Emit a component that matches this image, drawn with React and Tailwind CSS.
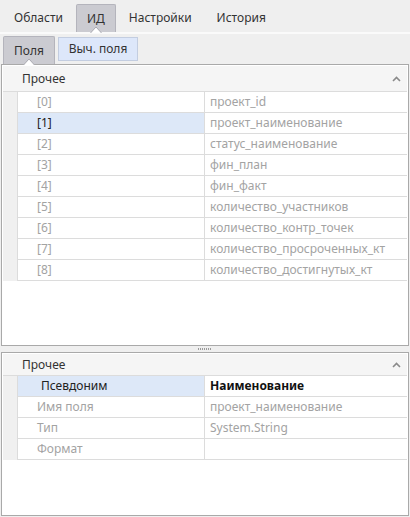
import React from 'react';

const fields = [
  'проект_id',
  'проект_наименование',
  'статус_наименование',
  'фин_план',
  'фин_факт',
  'количество_участников',
  'количество_контр_точек',
  'количество_просроченных_кт',
  'количество_достигнутых_кт',
];

const props = [
  { name: 'Псевдоним', value: 'Наименование', active: true },
  { name: 'Имя поля', value: 'проект_наименование' },
  { name: 'Тип', value: 'System.String' },
  { name: 'Формат', value: '' },
];

function Pointer() {
  return (
    <span className="absolute bottom-[-1px] left-1/2 -translate-x-1/2">
      <svg width="12" height="7" viewBox="0 0 12 7">
        <path d="M0.5 7 L6 1 L11.5 7" fill="#ffffff" stroke="#a9a9b0" strokeWidth="1" />
      </svg>
    </span>
  );
}

function Caret() {
  return (
    <svg width="9" height="6" viewBox="0 0 9 6" className="mr-[6px]">
      <path d="M1 5 L4.5 1.5 L8 5" fill="none" stroke="#8a8a8a" strokeWidth="1.6" />
    </svg>
  );
}

function GroupHeader({ h = 'h-[25px]' }) {
  return (
    <div className={'flex items-center justify-between border-b border-[#dcdcdc] bg-[#f5f5f5] pl-[19px] text-[#333] ' + h}>
      <span>Прочее</span>
      <Caret />
    </div>
  );
}

function Row({ left, right, active, leftClass = 'pl-[19px]', rightBold }) {
  return (
    <div className="flex h-[21px]">
      <div
        className={
          'flex w-[187px] shrink-0 items-center border-b border-r border-[#dcdcdc] ' +
          leftClass +
          (active ? ' bg-[#dde8f8] text-[#222]' : ' text-[#a3a3a3]')
        }
      >
        {left}
      </div>
      <div
        className={
          'flex flex-1 items-center border-b border-[#dcdcdc] pl-[5px] ' +
          (rightBold ? 'font-bold text-[#111]' : 'text-[#a3a3a3]')
        }
      >
        {right}
      </div>
    </div>
  );
}

function Grid({ children }) {
  return (
    <div className="flex">
      <div className="w-[15px] shrink-0 border-r border-[#dcdcdc] bg-[#f0f0f0]" />
      <div className="flex-1">{children}</div>
    </div>
  );
}

export default function App() {
  return (
    <div
      className="flex h-[517px] w-[410px] flex-col bg-[#efefef] text-[12px] text-[#333]"
      style={{ fontFamily: '"Noto Sans", "Open Sans", sans-serif' }}
    >
      <div className="flex h-[32px] items-end pl-[2px]">
        <div className="flex h-[28px] items-center px-[12px]">Области</div>
        <div className="relative ml-[1px] flex h-[28px] items-center rounded-t-[2px] border border-b-0 border-[#b4b4bc] bg-[#cbcbd1] px-[10px]">
          ИД
          <Pointer />
        </div>
        <div className="ml-[1px] flex h-[28px] items-center px-[12px]">Настройки</div>
        <div className="ml-[1px] flex h-[28px] items-center px-[12px]">История</div>
      </div>
      <div className="h-[2px] bg-[#fafafa]" />
      <div className="flex h-[30px] items-end gap-[3px] pl-[3px]">
        <div className="relative flex h-[28px] w-[52px] items-center justify-center rounded-t-[2px] border border-b-0 border-[#b4b4bc] bg-[#cbcbd1]">
          Поля
          <Pointer />
        </div>
        <div className="mb-[3px] flex h-[24px] w-[80px] items-center justify-center border border-[#c3cde0] bg-[#dde7fa]">
          Выч. поля
        </div>
      </div>

      <div className="mx-[1px] flex h-[282px] flex-col border border-[#a9a9a9] bg-white p-[1px]">
        <GroupHeader h="h-[26px]" />
        <Grid>
          {fields.map((f, i) => (
            <Row key={f} left={'[' + i + ']'} right={f} active={i === 1} />
          ))}
        </Grid>
      </div>

      <div className="flex h-[6px] items-center justify-center">
        <div className="h-[2px] w-[14px] bg-[repeating-linear-gradient(90deg,#9a9a9a_0_1px,transparent_1px_2px)]" />
      </div>

      <div className="mx-[1px] mb-[1px] flex flex-1 flex-col border border-[#a9a9a9] bg-white p-[1px]">
        <GroupHeader h="h-[22px]" />
        <Grid>
          {props.map((p) => (
            <Row
              key={p.name}
              left={p.name}
              right={p.value}
              active={p.active}
              rightBold={p.active}
              leftClass={p.active ? 'pl-[23px]' : 'pl-[19px]'}
            />
          ))}
        </Grid>
      </div>
    </div>
  );
}
